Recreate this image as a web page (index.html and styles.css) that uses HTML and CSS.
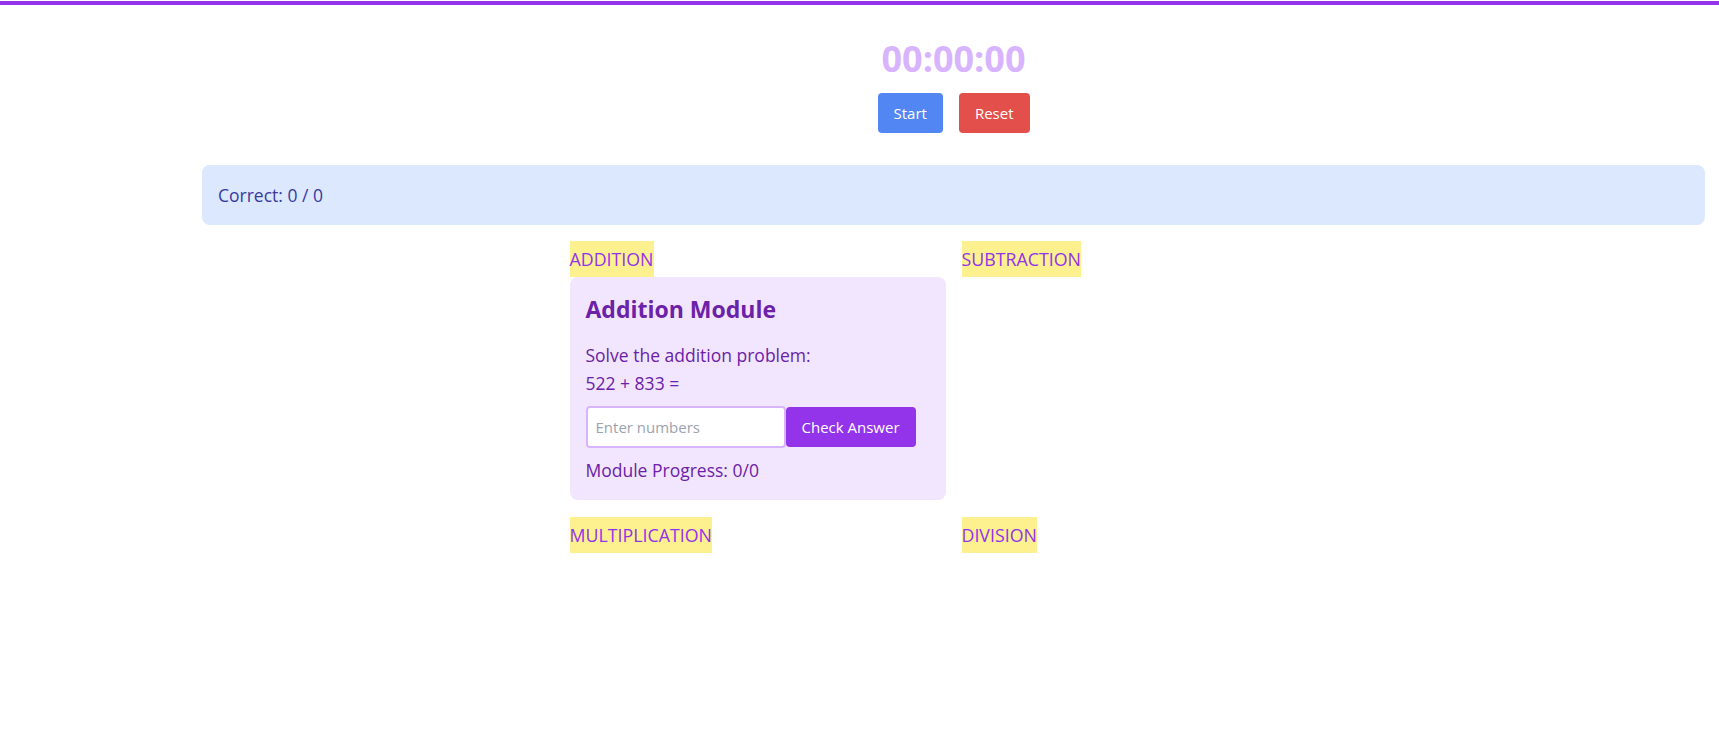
FILE: index.html
```html
<!DOCTYPE html>
<html lang="en">
<head>
<meta charset="utf-8">
<title>Math Practice</title>
<link rel="stylesheet" href="styles.css">
</head>
<body>
<div class="topbar"></div>
<main class="main">
  <section class="timer">
    <div class="timer-display">00:00:00</div>
    <div class="timer-buttons">
      <button class="btn btn-start">Start</button>
      <button class="btn btn-reset">Reset</button>
    </div>
  </section>
  <section class="score">Correct: 0 / 0</section>
  <section class="modules">
    <div class="module-cell">
      <div class="tab">ADDITION</div>
      <div class="card">
        <h2 class="card-title">Addition Module</h2>
        <p class="card-text">Solve the addition problem:</p>
        <p class="card-text">522 + 833 =</p>
        <div class="answer-row">
          <input class="answer-input" type="text" placeholder="Enter numbers">
          <button class="btn-check">Check Answer</button>
        </div>
        <p class="card-text progress">Module Progress: 0/0</p>
      </div>
    </div>
    <div class="module-cell">
      <div class="tab">SUBTRACTION</div>
    </div>
    <div class="module-cell">
      <div class="tab">MULTIPLICATION</div>
    </div>
    <div class="module-cell">
      <div class="tab">DIVISION</div>
    </div>
  </section>
</main>
</body>
</html>
```
FILE: styles.css
```css
* { box-sizing: border-box; }
body {
  margin: 0;
  font-family: "Open Sans", "Noto Sans", sans-serif;
  background: #ffffff;
  color: #6b21a8;
}
.topbar {
  margin-top: 1px;
  height: 4px;
  background: #9333ea;
}
.main {
  margin: 0 14px 0 202px;
}
.timer {
  padding-top: 34px;
  display: flex;
  flex-direction: column;
  align-items: center;
}
.timer-display {
  font-size: 36px;
  line-height: 40px;
  font-weight: 700;
  color: #d8b4fe;
}
.timer-buttons {
  margin-top: 14px;
  display: flex;
  gap: 16px;
}
.btn {
  height: 40px;
  padding: 0 16px;
  border: none;
  border-radius: 4px;
  color: #fff;
  font-family: inherit;
  font-size: 15px;
}
.btn-start { background: #5286f2; }
.btn-reset { background: #e3504b; }
.score {
  margin-top: 32px;
  background: #dbe8fd;
  border-radius: 8px;
  padding: 16px;
  font-size: 17.5px;
  line-height: 28px;
  font-weight: 500;
  color: #3a3a9e;
}
.modules {
  max-width: 768px;
  margin: 16px auto 0;
  display: grid;
  grid-template-columns: 1fr 1fr;
  column-gap: 16px;
  row-gap: 17px;
}
.module-cell {
  display: flex;
  flex-direction: column;
  align-items: flex-start;
}
.tab {
  background: #fdf08f;
  color: #9333ea;
  font-size: 17.8px;
  font-weight: 500;
  line-height: 24px;
  padding: 6px 0;
}
.card {
  align-self: stretch;
  background: #f1e6fd;
  border-radius: 8px;
  padding: 16px;
}
.card-title {
  margin: 0 0 16px;
  font-size: 23px;
  line-height: 32px;
  font-weight: 700;
  color: #6b21a8;
}
.card-text {
  margin: 0;
  font-size: 17.5px;
  font-weight: 500;
  line-height: 28px;
}
.answer-row {
  margin: 9px 0 8px;
  display: flex;
  align-items: center;
}
.answer-input {
  width: 200px;
  height: 42px;
  border: 2px solid #d8b4fe;
  border-radius: 4px;
  padding: 0 8px;
  font-family: inherit;
  font-size: 15px;
  background: #fff;
  outline: none;
}
.answer-input::placeholder { color: #9ca3af; }
.btn-check {
  height: 40px;
  padding: 0 16px;
  border: none;
  border-radius: 4px;
  background: #9333ea;
  color: #fff;
  font-family: inherit;
  font-size: 15px;
  white-space: nowrap;
}
```
